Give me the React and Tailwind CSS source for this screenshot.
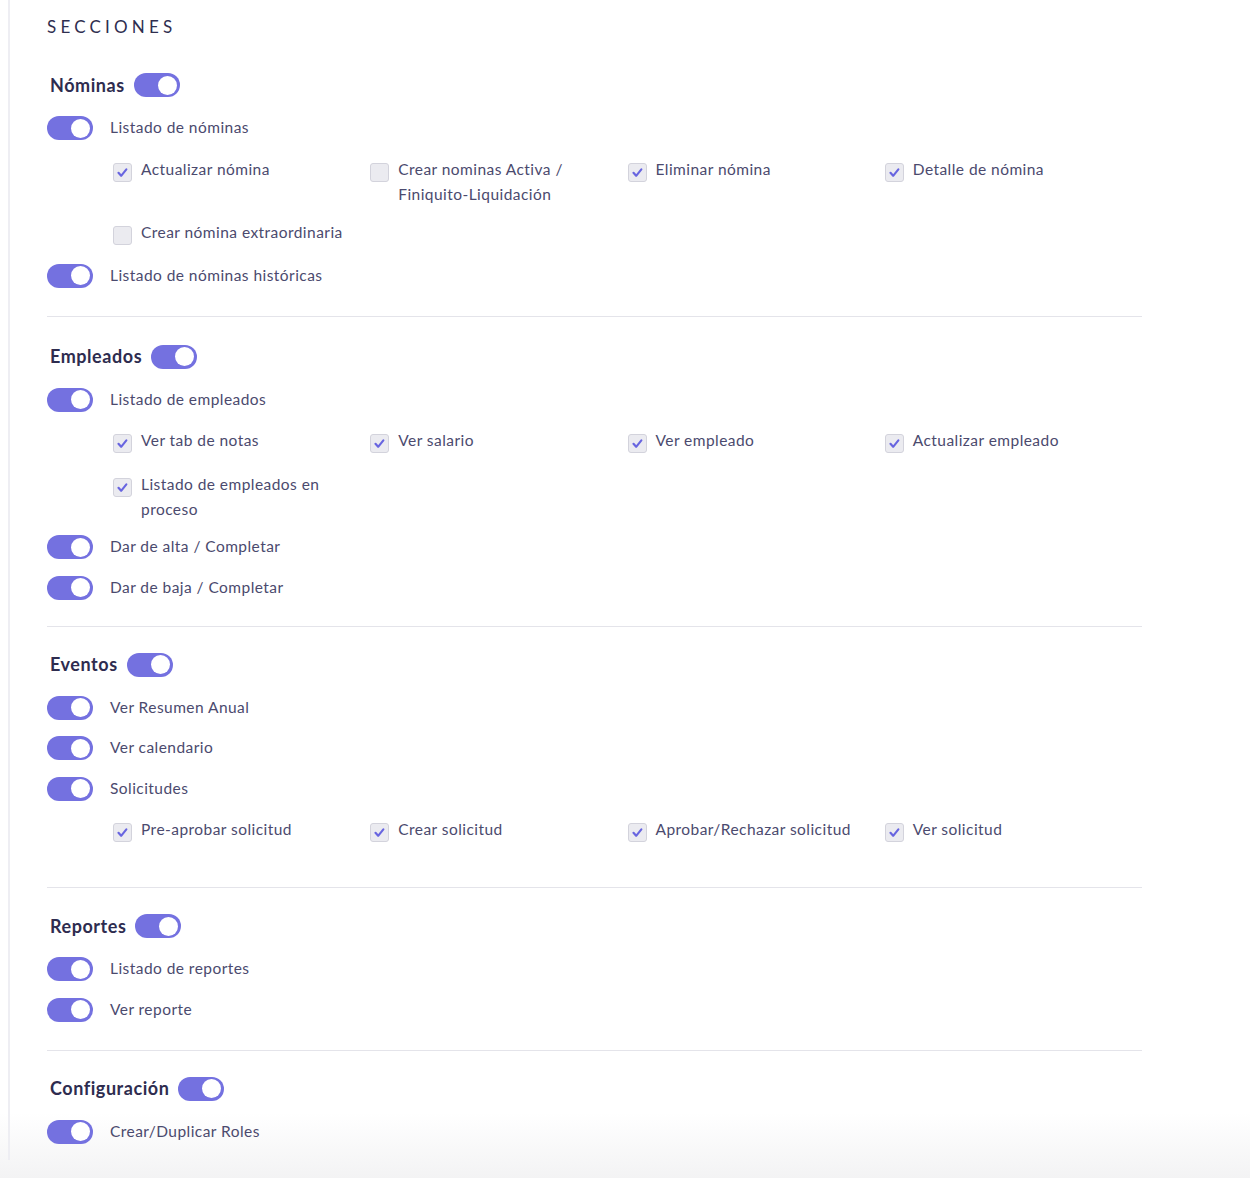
import React from "react";

const Toggle = () => (
  <span className="flex h-[24px] w-[46px] shrink-0 items-center justify-end rounded-full bg-[#7471e0] pr-[3px]">
    <span className="h-[19px] w-[19px] rounded-full bg-white" />
  </span>
);

const Checkbox = ({ checked }) => (
  <span className="mt-[6px] flex h-[19px] w-[19px] shrink-0 items-center justify-center rounded-[3px] border border-[#d3d3dc] bg-[#ebebf0]">
    {checked && (
      <svg width="19" height="19" viewBox="0 0 19 19" fill="none">
        <path d="M5 9.8l3 3.4L13.8 6" stroke="#6865e0" strokeWidth="2.4" strokeLinecap="round" strokeLinejoin="round" />
      </svg>
    )}
  </span>
);

const sections = [
  {
    title: "Nóminas",
    dividerTop: "mt-[28px]",
    dividerBottom: "mb-[25px]",
    rows: [
      { type: "toggle", label: "Listado de nóminas" },
      {
        type: "grid",
        items: [
          ["Actualizar nómina", true],
          ["Crear nominas Activa / Finiquito-Liquidación", false],
          ["Eliminar nómina", true],
          ["Detalle de nómina", true],
          ["Crear nómina extraordinaria", false],
        ],
      },
      { type: "toggle", label: "Listado de nóminas históricas" },
    ],
  },
  {
    title: "Empleados",
    dividerTop: "mt-[26px]",
    dividerBottom: "mb-[23px]",
    rows: [
      { type: "toggle", label: "Listado de empleados" },
      {
        type: "grid",
        items: [
          ["Ver tab de notas", true],
          ["Ver salario", true],
          ["Ver empleado", true],
          ["Actualizar empleado", true],
          ["Listado de empleados en proceso", true],
        ],
      },
      { type: "toggle", label: "Dar de alta / Completar" },
      { type: "toggle", label: "Dar de baja / Completar" },
    ],
  },
  {
    title: "Eventos",
    dividerTop: "mt-[26px]",
    dividerBottom: "mb-[23px]",
    rows: [
      { type: "toggle", label: "Ver Resumen Anual" },
      { type: "toggle", label: "Ver calendario" },
      { type: "toggle", label: "Solicitudes" },
      {
        type: "grid",
        items: [
          ["Pre-aprobar solicitud", true],
          ["Crear solicitud", true],
          ["Aprobar/Rechazar solicitud", true],
          ["Ver solicitud", true],
        ],
      },
    ],
  },
  {
    title: "Reportes",
    dividerTop: "mt-[28px]",
    dividerBottom: "mb-[23px]",
    rows: [
      { type: "toggle", label: "Listado de reportes" },
      { type: "toggle", label: "Ver reporte" },
    ],
  },
  {
    title: "Configuración",
    rows: [{ type: "toggle", label: "Crear/Duplicar Roles" }],
  },
];

function Section({ section, last }) {
  return (
    <div className="flex flex-col">
      <div className="flex h-[30px] items-center gap-[9px] pl-[3px]">
        <span className="text-[18px] font-bold tracking-[0.55px] text-[#2e2c4f]">{section.title}</span>
        <Toggle />
      </div>
      {section.rows.map((row, i) => {
        const prev = i === 0 ? "header" : section.rows[i - 1].type;
        if (row.type === "toggle") {
          const mt = prev === "header" ? "mt-[16px]" : prev === "grid" ? "mt-[0px]" : "mt-[16.5px]";
          return (
            <div key={i} className={`flex h-[24px] items-center gap-[17px] ${mt}`}>
              <Toggle />
              <span className="text-[15.5px] tracking-[0.45px] text-[#4b4a6e]">{row.label}</span>
            </div>
          );
        }
        return (
          <div key={i} className="ml-[66px] mt-[16.5px] grid grid-cols-4">
            {row.items.map(([label, checked], j) => (
              <div key={j} className="flex min-h-[44px] items-start gap-[9px] pb-[13px] pr-[20px]">
                <Checkbox checked={checked} />
                <span className="text-[15.5px] leading-[25px] tracking-[0.45px] text-[#4b4a6e]">{label}</span>
              </div>
            ))}
          </div>
        );
      })}
      {!last && <div className={`h-px bg-[#e4e4ea] ${section.dividerTop} ${section.dividerBottom}`} />}
    </div>
  );
}

export default function App() {
  return (
    <div className="min-h-[1178px] bg-linear-to-b from-white from-[94.5%] to-[#f3f3f4] font-['Lato','Liberation_Sans',sans-serif]">
      <div className="ml-[8px] h-[1160px] border-l-2 border-[#eeeef3] pl-[37px]">
        <div className="w-[1095px]">
          <div className="pt-[16px] text-[17px] leading-[22px] tracking-[4.2px] text-[#2f2e4f]">SECCIONES</div>
          <div className="mt-[32px] flex flex-col">
            {sections.map((s, i) => (
              <Section key={s.title} section={s} last={i === sections.length - 1} />
            ))}
          </div>
        </div>
      </div>
    </div>
  );
}
